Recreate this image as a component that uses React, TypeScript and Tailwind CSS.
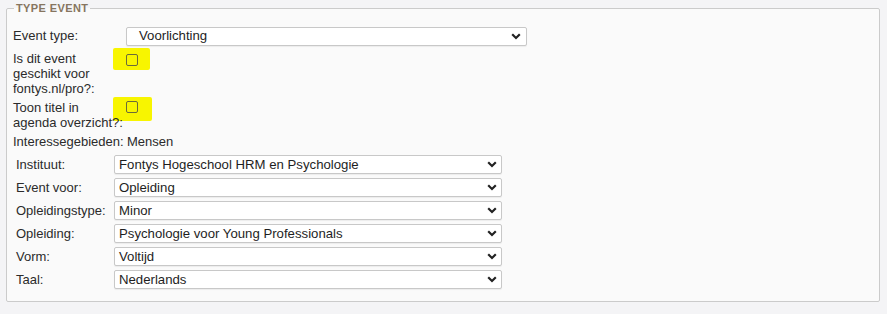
import React from "react";

const fields = [
    { label: "Instituut:", value: "Fontys Hogeschool HRM en Psychologie" },
    { label: "Event voor:", value: "Opleiding" },
    { label: "Opleidingstype:", value: "Minor" },
    { label: "Opleiding:", value: "Psychologie voor Young Professionals" },
    { label: "Vorm:", value: "Voltijd" },
    { label: "Taal:", value: "Nederlands" },
];

function Chevron() {
    return (
        <svg width="10" height="7" viewBox="0 0 10 7" className="shrink-0">
            <path d="M1.2 1.3 L5 5 L8.8 1.3" fill="none" stroke="#222" strokeWidth="2.2" strokeLinejoin="miter" />
        </svg>
    );
}

function Select({ value, wide }: { value: string; wide?: boolean }) {
    return (
        <div
            className={
                wide
                    ? "flex h-[19px] w-[401px] items-center justify-between rounded-[2px] border border-[#c8c8c8] bg-white pl-[12px] pr-[5px] shadow-[0_1px_1px_rgba(0,0,0,0.06)]"
                    : "flex h-[19px] w-[388px] items-center justify-between rounded-[2px] border border-[#c8c8c8] bg-white pl-[4px] pr-[4px] shadow-[0_1px_1px_rgba(0,0,0,0.06)]"
            }
        >
            <span className="text-[13.2px] leading-none text-[#1e1e1e]">{value}</span>
            <Chevron />
        </div>
    );
}

function Check({ tall }: { tall?: boolean }) {
    return (
        <div
            className={
                tall
                    ? "-ml-[13px] -mt-[3px] flex h-[24px] w-[39px] items-start rounded-[2px] bg-[#f8f500] pl-[13px] pt-[4px]"
                    : "-ml-[13px] -mt-[3px] flex h-[22px] w-[37px] items-start rounded-[2px] bg-[#f8f500] pl-[13px] pt-[6px]"
            }
        >
            <span className="h-[12px] w-[12px] rounded-[2px] border border-[#6b6b3a]" />
        </div>
    );
}

export default function App() {
    return (
        <div className="min-h-[314px] bg-[#f4f4f6] px-[6px] pt-[2px] font-['Liberation_Sans',Arial,sans-serif] text-[13px] text-[#2b2b2b]">
            <fieldset className="w-[874px] rounded-[2px] border border-[#cbcbcb] bg-[#fafafa] px-[6px] pb-[10px] pt-[11px]">
                <legend className="ml-[1px] px-[2px] text-[11px] font-bold leading-[13px] tracking-[0.4px] text-[#86755f]">
                    TYPE EVENT
                </legend>

                <div className="flex h-[20px] items-center">
                    <span className="w-[113px] shrink-0">Event type:</span>
                    <Select value="Voorlichting" wide />
                </div>

                <div className="mt-[5px] flex">
                    <span className="relative z-10 w-[113px] shrink-0 leading-[15px]">
                        Is dit event
                        <br />
                        geschikt voor
                        <br />
                        fontys.nl/pro?:
                    </span>
                    <Check />
                </div>

                <div className="mt-[4px] flex">
                    <span className="relative z-10 w-[113px] shrink-0 whitespace-nowrap leading-[15px]">
                        Toon titel in
                        <br />
                        agenda overzicht?:
                    </span>
                    <Check tall />
                </div>

                <div className="mt-[4px] flex leading-[15px]">
                    <span className="w-[114px] shrink-0 whitespace-nowrap">Interessegebieden:</span>
                    <span>Mensen</span>
                </div>

                <div className="mt-[4px] pl-[3px]">
                    {fields.map((f) => (
                        <div key={f.label} className="flex h-[23px] items-center">
                            <span className="w-[98px] shrink-0">{f.label}</span>
                            <Select value={f.value} />
                        </div>
                    ))}
                </div>
            </fieldset>
        </div>
    );
}
